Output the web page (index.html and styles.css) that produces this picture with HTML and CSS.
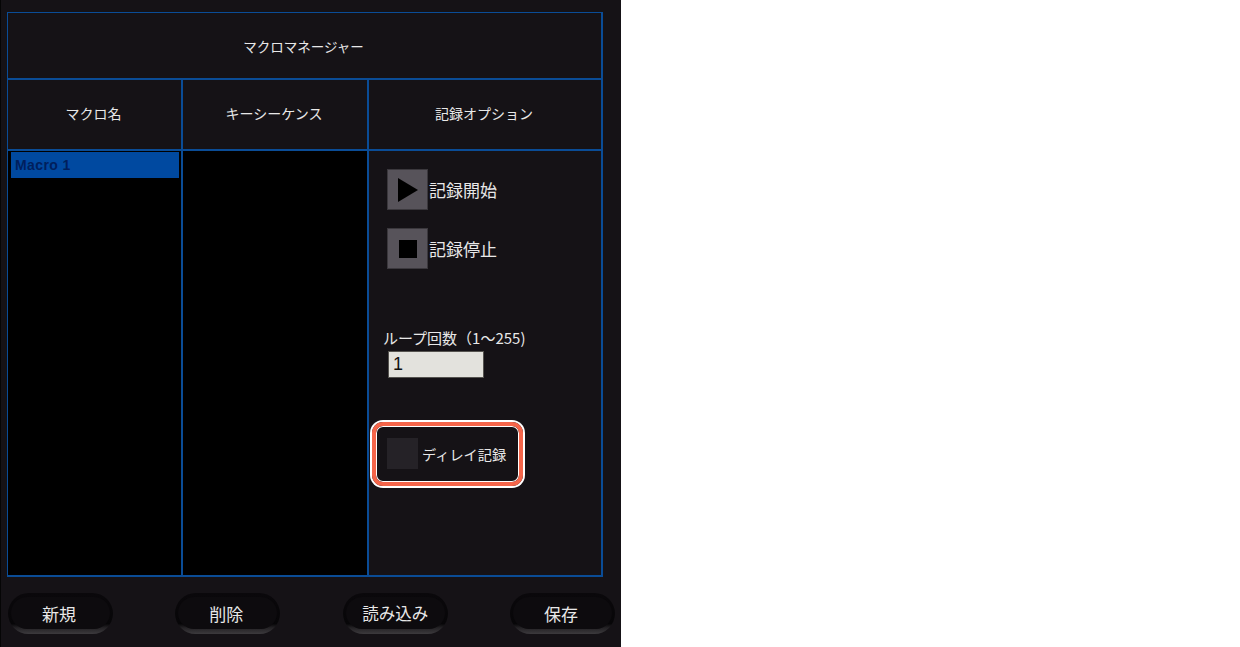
FILE: index.html
```html
<!DOCTYPE html>
<html lang="ja">
  <head>
    <meta charset="UTF-8" />
    <title>マクロマネージャー</title>
    <link rel="stylesheet" href="styles.css">
  </head>
  <body>
    <div class="panel">
      <div class="table">
        <div class="title">マクロマネージャー</div>
        <div class="head">マクロ名</div>
        <div class="head">キーシーケンス</div>
        <div class="head last">記録オプション</div>

        <div class="list">
          <div class="list-item">Macro 1</div>
        </div>
        <div class="list"></div>

        <div class="options">
          <div class="rec-row">
            <div class="rec-btn">
              <svg width="20" height="24" viewBox="0 0 20 24"><path d="M0 0 L20 12 L0 24 Z" fill="#000" /></svg>
            </div>
            <span>記録開始</span>
          </div>
          <div class="rec-row second">
            <div class="rec-btn">
              <div class="stop"></div>
            </div>
            <span>記録停止</span>
          </div>

          <div class="loop-label">ループ回数（1～255)</div>
          <div class="loop-input">1</div>

          <div class="delay-row">
            <div class="check"></div>
            <span>ディレイ記録</span>
            <!-- highlight on top of the row -->
            <div class="highlight"></div>
          </div>
        </div>
      </div>

      <div class="buttons">
        <div class="btn"><span>新規</span></div>
        <div class="btn"><span>削除</span></div>
        <div class="btn"><span class="wide">読み込み</span></div>
        <div class="btn"><span>保存</span></div>
      </div>
    </div>
  </body>
</html>
```

FILE: styles.css
```css
* {
  margin: 0;
  padding: 0;
  box-sizing: border-box;
}

html,
body {
  height: 100%;
  background: #fff;
  overflow: hidden;
}

body {
  font-family: "Noto Sans CJK JP", "Liberation Sans", sans-serif;
  color: #e8e8e8;
}

.panel {
  width: 621px;
  height: 647px;
  background: #151216;
  border-left: 1px solid #050505;
  padding: 12px 0 0 6px;
}

/* Main table */
.table {
  width: 596px;
  height: 565px;
  display: grid;
  grid-template-columns: 175px 186px 1fr;
  grid-template-rows: 67px 71px 1fr;
  border: 1px solid #0a4c96;
  border-width: 1px 0 0 1px;
  border-right: 2px solid #0a4c96;
  border-bottom: 2px solid #0a4c96;
}

.title {
  grid-column: 1 / 4;
  display: flex;
  align-items: center;
  justify-content: center;
  font-size: 13.5px;
  padding-right: 2px;
  border-bottom: 2px solid #0a4c96;
}

.head {
  display: flex;
  align-items: center;
  justify-content: center;
  font-size: 14px;
  padding: 0 2px 4px 0;
  border-bottom: 2px solid #0a4c96;
  border-right: 2px solid #0a4c96;
}

.head.last {
  border-right: 0;
}

.list {
  background: #000;
  border-right: 2px solid #0a4c96;
  padding: 1px 2px 0 3px;
}

.list-item {
  height: 26px;
  background: #0049a0;
  color: #001f5c;
  font-family: "Liberation Sans", sans-serif;
  font-size: 14px;
  font-weight: bold;
  letter-spacing: 0.4px;
  line-height: 26px;
  padding-left: 4px;
}

/* Recording options */
.options {
  padding: 18px 0 0 15px;
}

.rec-row {
  display: flex;
  align-items: center;
  font-size: 17px;
  margin-left: 3px;
}

.rec-row.second {
  margin-top: 18px;
}

.rec-btn {
  width: 41px;
  height: 41px;
  background: #57535a;
  border: 1px solid #3b383d;
  display: flex;
  align-items: center;
  justify-content: center;
  margin-right: 1px;
  flex-shrink: 0;
}

.stop {
  width: 18px;
  height: 18px;
  background: #000;
}

.loop-label {
  margin: 58px 0 0 -1px;
  font-size: 15px;
  line-height: 22px;
  white-space: nowrap;
}

.loop-input {
  width: 96px;
  height: 27px;
  margin: 2px 0 0 4px;
  background: #e3e2dd;
  border: 1px solid #55534f;
  color: #111;
  font-family: "Liberation Sans", sans-serif;
  font-size: 18px;
  line-height: 25px;
  padding-left: 4px;
}

.delay-row {
  position: relative;
  display: flex;
  align-items: center;
  margin: 60px 0 0 3px;
  font-size: 14.2px;
}

.check {
  width: 31px;
  height: 31px;
  background: #252227;
  margin-right: 4px;
}

/* Red callout around the delay option */
.highlight {
  position: absolute;
  left: -15px;
  top: -16px;
  width: 151px;
  height: 64px;
  border: 4px solid #f5654a;
  border-radius: 11px;
  box-shadow: 0 0 0 2px #fff, inset 0 0 0 1px #fff;
}

/* Bottom buttons */
.buttons {
  display: flex;
  justify-content: space-between;
  width: 608px;
  margin-top: 16px;
  padding-left: 1px;
}

.btn {
  width: 105px;
  height: 41px;
  border-radius: 21px;
  padding: 4px 3px 5px;
  background: linear-gradient(#0a080b 0%, #070608 75%, #242225 85%, #3c3a3d 100%);
}

.btn span {
  display: flex;
  align-items: center;
  justify-content: center;
  height: 100%;
  padding-right: 3px;
  border-radius: 16px;
  background: #0d0b0e;
  font-size: 17px;
}

.btn span.wide {
  padding-right: 0;
  font-size: 16.5px;
}
```
